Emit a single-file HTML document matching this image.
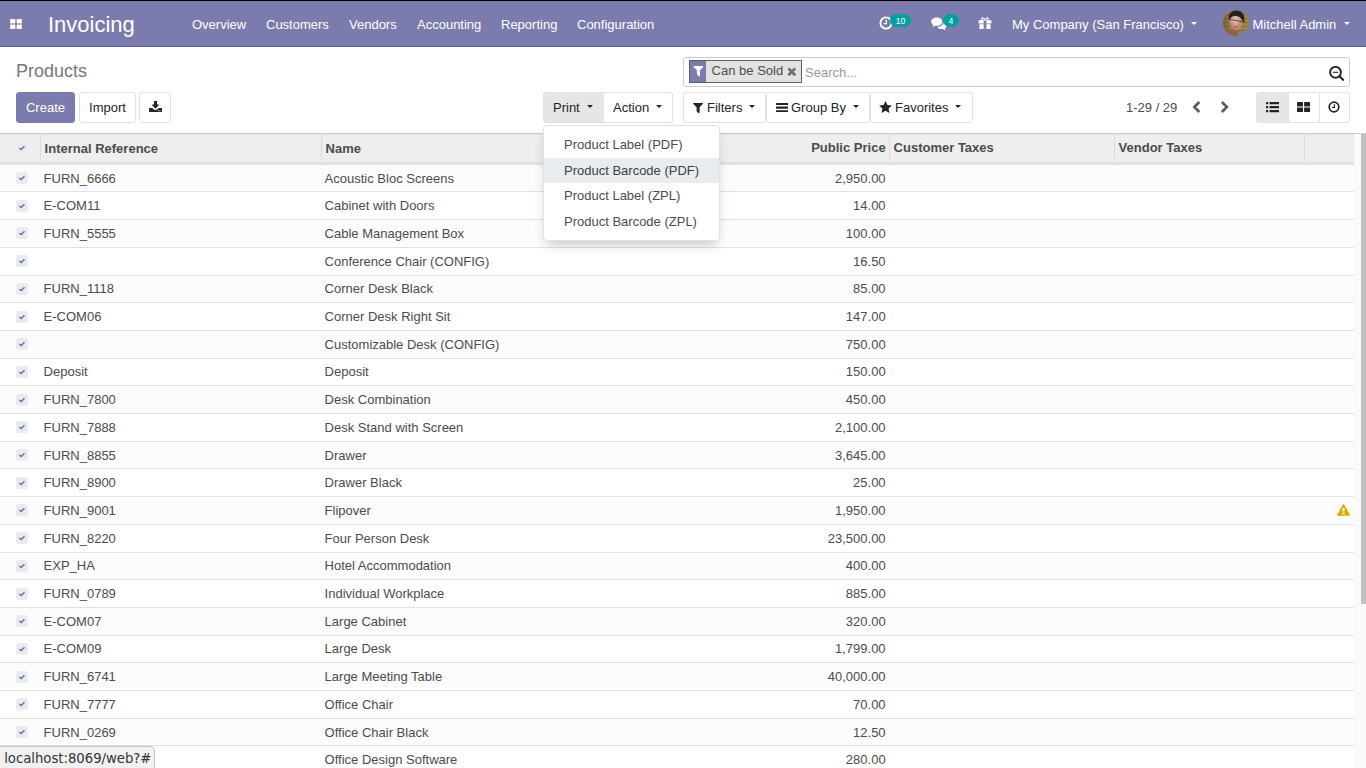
<!DOCTYPE html>
<html lang="en">
<head>
<meta charset="utf-8">
<title>Odoo - Products</title>
<style>
*{box-sizing:border-box;margin:0;padding:0}
html,body{width:1366px;height:768px;overflow:hidden;background:#fff}
body{font-family:"Liberation Sans",Arial,Helvetica,sans-serif;font-size:13px;line-height:19.5px;color:#4c4c4c;position:relative}
.abs{position:absolute}
svg{display:block}
/* navbar */
#topline{position:absolute;left:0;top:0;width:1366px;height:1px;background:#000}
#nav{position:absolute;left:0;top:1px;width:1366px;height:46px;background:#7C7BAD;border-bottom:1px solid #5f5e97;color:#fff}
#nav .t{position:absolute;white-space:nowrap;color:#fff}
#nav .menu{top:14px;font-size:13px;line-height:19.5px}
#brand{left:48px;top:7px;font-size:22px;line-height:33px}
.badge{position:absolute;background:#00A09D;color:#fff;border-radius:7px;font-size:8.6px;line-height:14.4px;height:13px;text-align:center}
.caret{position:absolute;width:0;height:0;border-left:3.2px solid transparent;border-right:3.2px solid transparent;border-top:3.4px solid #fff}
.caret.dk{border-top-color:#212529}
/* control panel */
#cp{position:absolute;left:0;top:47px;width:1366px;height:87px;background:#fff;border-bottom:1px solid #cacaca}
#crumb{position:absolute;left:16px;top:58px;font-size:18px;line-height:27px;color:#777}
.btn{position:absolute;top:92px;height:31px;border:1px solid #dee2e6;background:#fff;color:#212529;border-radius:3px;font-size:13px;line-height:29px;white-space:nowrap;text-align:center}
.btn.pri{background:#7C7BAD;border-color:#7C7BAD;color:#fff}
.btn.act{background:#e6e6e6}
#search{position:absolute;left:683px;top:57px;width:667px;height:30px;border:1px solid #ccc;border-radius:3px;background:#fff}
#facet{position:absolute;left:689px;top:60px;width:113px;height:23px;border:1px solid #57616b;background:#e2e2e0}
#facet .lab{position:absolute;left:0;top:0;width:16px;height:21px;background:#7C7BAD}
#facet .val{position:absolute;left:21.6px;top:0px;line-height:19px;color:#4c4c4c;white-space:nowrap}
#ph{position:absolute;left:805px;top:63px;color:#9a9a9a;line-height:19.5px}
/* dropdown */
#dd{position:absolute;left:543px;top:125px;width:177px;height:116px;background:#fff;border:1px solid #dee2e6;border-radius:4px;box-shadow:0 6px 12px -4px rgba(0,0,0,.25);padding-top:6px;z-index:5}
#dd div{height:25.5px;line-height:19.5px;padding:3px 20px;color:#4c4c4c;white-space:nowrap}
#dd div.hov{background:#e9ecef;color:#3f3f3f}
/* table */
#thead{position:absolute;left:0;top:134px;width:1354px;height:29.7px;background:#eee;border-top:1px solid #dee2e6;border-bottom:2px solid #dee2e6;font-weight:bold;color:#4c4c4c}
#thead .h{position:absolute;top:3.6px;line-height:19.5px;white-space:nowrap}
#thead .dv{position:absolute;top:0;width:1px;height:27px;background:#dcdcdc}
#tbody{position:absolute;left:0;top:163.75px;width:1354px}
.row{position:absolute;left:0;width:1354px;height:28.7px;border-top:1px solid #dee2e6;background:#fff}
.row.odd{background:#fcfcfc}
.row span,.row svg{position:absolute;top:3.8px;line-height:19.5px;white-space:nowrap}
.cb{left:16px;top:7.35px !important;width:12px;height:12px;border-radius:2.5px;background:#e9ecef}
.cb svg{top:0 !important;left:0}
#thead .cb{position:absolute;top:7.35px !important}
.c1{left:43.6px}.c2{left:324.6px}.c3{right:468.4px}
.warn{left:1337px;top:6.9px !important}
/* scrollbar */
#sbt{position:absolute;left:1354px;top:134px;width:12px;height:634px;background:#fafafa}
#sbh{position:absolute;left:1361px;top:134px;width:5px;height:470px;background:#c1c1c1}
/* status */
#status{position:absolute;left:-1px;top:746px;height:23px;width:156px;background:#f1f1f1;border:1px solid #c4c4c4;border-top-right-radius:4px;font-family:"DejaVu Sans Condensed","DejaVu Sans",sans-serif;font-size:14.7px;line-height:22px;color:#333;padding-left:4.2px;z-index:9;white-space:nowrap}
</style>
</head>
<body>
<div id="nav">
  <svg class="abs" style="left:10px;top:18px" width="12" height="10" viewBox="0 0 12 10"><rect x="0" y="0" width="5.4" height="4.4" rx=".8" fill="#fff"/><rect x="6.6" y="0" width="5.4" height="4.4" rx=".8" fill="#fff"/><rect x="0" y="5.6" width="5.4" height="4.4" rx=".8" fill="#fff"/><rect x="6.6" y="5.6" width="5.4" height="4.4" rx=".8" fill="#fff"/></svg>
  <span class="t" id="brand">Invoicing</span>
  <span class="t menu" style="left:192px">Overview</span>
  <span class="t menu" style="left:266px">Customers</span>
  <span class="t menu" style="left:349px">Vendors</span>
  <span class="t menu" style="left:417px">Accounting</span>
  <span class="t menu" style="left:501px">Reporting</span>
  <span class="t menu" style="left:577px">Configuration</span>
  <!-- activity clock -->
  <svg class="abs" style="left:879px;top:14.9px" width="14" height="14" viewBox="0 0 14 14"><circle cx="7" cy="7" r="5.6" fill="none" stroke="#fff" stroke-width="1.9"/><path d="M7.3 3.8 V7.6 H4.6" fill="none" stroke="#fff" stroke-width="1.3"/></svg>
  <span class="badge" style="left:890px;top:13px;width:21px">10</span>
  <!-- comments -->
  <svg class="abs" style="left:930.6px;top:16.2px" width="16.4" height="13.5" viewBox="0 0 17 14"><path d="M6 0.6 C9.2 0.6 11.8 2.5 11.8 4.9 C11.8 7.3 9.2 9.2 6 9.2 C5.5 9.2 5 9.15 4.5 9.05 C3.7 9.7 2.6 10.2 1.4 10.3 C2 9.7 2.4 9 2.5 8.3 C1.1 7.5 0.2 6.3 0.2 4.9 C0.2 2.5 2.8 0.6 6 0.6 Z" fill="#fff"/><path d="M13 5.2 C14.9 5.8 16.3 7.1 16.3 8.7 C16.3 9.9 15.5 11 14.3 11.7 C14.4 12.4 14.8 13 15.4 13.6 C14.2 13.5 13.2 13.1 12.4 12.4 C12 12.5 11.5 12.5 11 12.5 C9.3 12.5 7.8 12 6.8 11.1 C7 10.4 7 10.4 7.2 10.2 C10.6 10 13.2 7.8 13 5.2 Z" fill="#fff"/></svg>
  <span class="badge" style="left:943px;top:13px;width:16px">4</span>
  <!-- gift -->
  <svg class="abs" style="left:977.8px;top:15.7px" width="14" height="12.7" viewBox="0 0 14 13"><path d="M4.2 0.4 C5.3 0.1 6.3 1 7 2.3 C7.7 1 8.7 0.1 9.8 0.4 C11.3 0.8 11.4 2.7 10.2 3.4 H13.6 V6.6 H0.4 V3.4 H3.8 C2.6 2.7 2.7 0.8 4.2 0.4 Z M4.6 1.6 C4 1.7 4 2.6 4.6 2.9 C5.1 3.2 5.8 3.3 6.3 3.3 C6 2.5 5.3 1.5 4.6 1.6 Z M9.4 1.6 C8.7 1.5 8 2.5 7.7 3.3 C8.2 3.3 8.9 3.2 9.4 2.9 C10 2.6 10 1.7 9.4 1.6 Z" fill="#fff" fill-rule="evenodd"/><path d="M1.3 7.4 H12.7 V12 C12.7 12.5 12.3 12.8 11.9 12.8 H2.1 C1.7 12.8 1.3 12.5 1.3 12 Z" fill="#fff"/><rect x="5.6" y="3.6" width="2.8" height="8.6" fill="#7C7BAD"/></svg>
  <span class="t menu" style="left:1012px">My Company (San Francisco)</span>
  <span class="caret" style="left:1191px;top:21px"></span>
  <!-- avatar -->
  <svg class="abs" style="left:1223px;top:9px" width="26" height="26" viewBox="0 0 26 26"><defs><clipPath id="av"><circle cx="13" cy="13" r="13"/></clipPath><radialGradient id="fg" cx="45%" cy="35%" r="70%"><stop offset="0" stop-color="#dcc3b9"/><stop offset=".55" stop-color="#cfa08f"/><stop offset="1" stop-color="#b27a62"/></radialGradient><linearGradient id="bgg" x1="0" x2="1" y1="0" y2="0"><stop offset="0" stop-color="#75602f"/><stop offset=".35" stop-color="#957e3e"/><stop offset="1" stop-color="#a38b47"/></linearGradient></defs><g clip-path="url(#av)"><rect x="-1" y="-1" width="28" height="28" fill="url(#bgg)"/><path d="M-2 4.5 H28 M-2 8.5 H28 M-2 12.5 H28 M-2 16.5 H28 M-2 20.5 H28" stroke="#5f4c28" stroke-width=".9" opacity=".45"/><path d="M3 29 C3 22 7 20 11 19 L16 18.5 C18 21 18 25 17 29 Z" fill="#8c6248"/><path d="M15 22 C18 19.5 22.5 21.5 23 29 H13.5 Z" fill="#7c8385"/><ellipse cx="13.1" cy="12.4" rx="6.5" ry="8.5" transform="rotate(-10 13.1 12.4)" fill="#b98a72" opacity=".5"/><ellipse cx="13.1" cy="12.4" rx="5.8" ry="7.8" transform="rotate(-10 13.1 12.4)" fill="url(#fg)"/><ellipse cx="9.4" cy="13.8" rx="1.8" ry="2.1" fill="#c07f6c" opacity=".55"/><ellipse cx="16.2" cy="14.7" rx="1.8" ry="2.1" fill="#c07a68" opacity=".55"/><ellipse cx="6.3" cy="12" rx=".9" ry="1.8" fill="#b9735c" opacity=".8"/><path d="M6.2 9.8 C5 2.8 10 0.2 14.8 0.8 C20.2 1.5 22 6.2 20.6 13.4 C19.6 8.6 17.2 6.4 13.6 5.9 C10.6 5.5 7.8 6.8 6.2 9.8 Z" fill="#241f23" opacity=".45" transform="translate(13 6) scale(1.08) translate(-13 -6)"/><path d="M6.2 9.8 C5 2.8 10 0.2 14.8 0.8 C20.2 1.5 22 6.2 20.6 13.4 C19.6 8.6 17.2 6.4 13.6 5.9 C10.6 5.5 7.8 6.8 6.2 9.8 Z" fill="#231e22"/><path d="M6.4 9.5 L11.8 10.3 L19.4 11.9" stroke="#2e2629" stroke-width="1" fill="none" opacity=".8"/><ellipse cx="12.5" cy="16.7" rx="2.3" ry="1.3" fill="#b05866" opacity=".5"/><ellipse cx="12.5" cy="16.7" rx="1.6" ry=".8" fill="#b05866"/></g></svg>
  <span class="t menu" style="left:1252.5px">Mitchell Admin</span>
  <span class="caret" style="left:1344px;top:21px"></span>
</div>
<div id="topline"></div>

<div id="cp"></div>
<div id="crumb">Products</div>
<div class="btn pri" style="left:16px;width:59px">Create</div>
<div class="btn" style="left:79px;width:57px">Import</div>
<div class="btn" style="left:139px;width:32px"><svg class="abs" style="left:9px;top:7.8px" width="13" height="11.2" viewBox="0 0 13 11.2"><path d="M5 0 H8 V3.6 H10.4 L6.5 7.7 L2.6 3.6 H5 Z" fill="#212529"/><path d="M0.6 7 H3.3 L4.6 8.3 C5.6 9.3 7.4 9.3 8.4 8.3 L9.7 7 H12.4 C12.7 7 13 7.3 13 7.6 V10.6 C13 10.9 12.7 11.2 12.4 11.2 H.6 C.3 11.2 0 10.9 0 10.6 V7.6 C0 7.3 .3 7 .6 7Z" fill="#212529"/><circle cx="11" cy="9.7" r=".55" fill="#fff"/><circle cx="9.4" cy="9.7" r=".55" fill="#fff"/></svg></div>

<div class="btn act" style="left:543px;width:61px;border-radius:3px 0 0 3px;border-right:none;text-align:left;padding-left:9px">Print<span class="caret dk" style="left:42.9px;top:12px"></span></div>
<div class="btn" style="left:604px;width:69px;border-radius:0 3px 3px 0;border-left:none;text-align:left;padding-left:9px">Action<span class="caret dk" style="left:51.9px;top:12px"></span></div>

<div id="search"></div>
<div id="facet"><span class="lab"><svg class="abs" style="left:2.6px;top:5.4px" width="10.8" height="10.6" viewBox="0 0 10.2 10.6"><path d="M0.5 0 H9.7 C10.1 0 10.35 .5 10.05 .8 L6.6 4.3 V10.1 C6.6 10.5 6.1 10.7 5.85 10.45 L3.85 8.6 C3.7 8.45 3.6 8.25 3.6 8.05 V4.3 L.15 .8 C-.15 .5 .1 0 .5 0 Z" fill="#fff"/></svg></span><span class="val">Can be Sold</span><svg class="abs" style="left:97px;top:5.8px" width="9.6" height="9.6" viewBox="0 0 9 9"><path d="M1.3 1.3 L7.7 7.7 M7.7 1.3 L1.3 7.7" stroke="#69717a" stroke-width="2.6" stroke-linecap="butt"/></svg></div>
<div id="ph">Search...</div>
<svg class="abs" style="left:1329px;top:65.8px" width="16" height="15" viewBox="0 0 16 15"><circle cx="6.5" cy="6.3" r="5.4" fill="none" stroke="#212529" stroke-width="1.9"/><path d="M10.5 10.2 L14.1 13.8" stroke="#212529" stroke-width="2.1" stroke-linecap="round"/><path d="M3.8 6.3 H9.3" stroke="#212529" stroke-width="1.1"/></svg>

<div class="btn" style="left:683px;width:83px;text-align:left;padding-left:23px"><svg class="abs" style="left:9.2px;top:9.7px" width="10.2" height="10.6" viewBox="0 0 10.2 10.6"><path d="M0.5 0 H9.7 C10.1 0 10.35 .5 10.05 .8 L6.6 4.3 V10.1 C6.6 10.5 6.1 10.7 5.85 10.45 L3.85 8.6 C3.7 8.45 3.6 8.25 3.6 8.05 V4.3 L.15 .8 C-.15 .5 .1 0 .5 0 Z" fill="#212529"/></svg>Filters<span class="caret dk" style="left:64.9px;top:12px"></span></div>
<div class="btn" style="left:766px;width:104px;text-align:left;padding-left:24px"><svg class="abs" style="left:8.8px;top:9.8px" width="12.1" height="9.3" viewBox="0 0 12.1 9.3"><rect y="0" width="12.1" height="2.1" rx=".4" fill="#212529"/><rect y="3.6" width="12.1" height="2.1" rx=".4" fill="#212529"/><rect y="7.2" width="12.1" height="2.1" rx=".4" fill="#212529"/></svg>Group By<span class="caret dk" style="left:85.9px;top:12px"></span></div>
<div class="btn" style="left:870px;width:103px;text-align:left;padding-left:24px"><svg class="abs" style="left:8px;top:8px" width="13" height="12" viewBox="0 0 13 12"><path d="M6.5 0 L8.4 4 L12.9 4.6 L9.6 7.6 L10.5 12 L6.5 9.8 L2.5 12 L3.4 7.6 L0.1 4.6 L4.6 4 Z" fill="#212529"/></svg>Favorites<span class="caret dk" style="left:83.9px;top:12px"></span></div>

<div class="abs" style="left:1126px;top:98px;line-height:19.5px">1-29 / 29</div>
<svg class="abs" style="left:1192.4px;top:100.6px" width="9" height="12" viewBox="0 0 9 12"><path d="M7.3 1 L2.3 6 L7.3 11" fill="none" stroke="#5c5c5c" stroke-width="2.6"/></svg>
<svg class="abs" style="left:1220px;top:100.6px" width="9" height="12" viewBox="0 0 9 12"><path d="M1.9 1 L6.9 6 L1.9 11" fill="none" stroke="#5c5c5c" stroke-width="2.6"/></svg>

<div class="btn act" style="left:1256px;width:33px;border-radius:3px 0 0 3px"><svg class="abs" style="left:8.7px;top:9.4px" width="13.4" height="10.2" viewBox="0 0 13.4 10.2"><rect x="0" y="0" width="2.2" height="2.3" rx=".4" fill="#212529"/><rect x="3.5" y="0" width="9.9" height="2.3" rx=".4" fill="#212529"/><rect x="0" y="3.95" width="2.2" height="2.3" rx=".4" fill="#212529"/><rect x="3.5" y="3.95" width="9.9" height="2.3" rx=".4" fill="#212529"/><rect x="0" y="7.9" width="2.2" height="2.3" rx=".4" fill="#212529"/><rect x="3.5" y="7.9" width="9.9" height="2.3" rx=".4" fill="#212529"/></svg></div>
<div class="btn" style="left:1288px;width:32px;border-radius:0"><svg class="abs" style="left:8.1px;top:9px" width="13.1" height="10.2" viewBox="0 0 13.1 10.2"><rect x="0" y="0" width="6" height="4.6" rx=".6" fill="#212529"/><rect x="7.1" y="0" width="6" height="4.6" rx=".6" fill="#212529"/><rect x="0" y="5.6" width="6" height="4.6" rx=".6" fill="#212529"/><rect x="7.1" y="5.6" width="6" height="4.6" rx=".6" fill="#212529"/></svg></div>
<div class="btn" style="left:1319px;width:31px;border-radius:0 3px 3px 0"><svg class="abs" style="left:8.3px;top:8.2px" width="12" height="12" viewBox="0 0 12 12"><circle cx="6" cy="6" r="4.8" fill="none" stroke="#212529" stroke-width="1.7"/><path d="M6.4 3.2 V6.5 H3.9" fill="none" stroke="#212529" stroke-width="1.2"/></svg></div>

<div id="thead">
  <span class="cb"><svg viewBox="0 0 12 12" width="12" height="12"><path d="M3.3 6.0 L5.2 7.6 L8.5 4.2" fill="none" stroke="#716bad" stroke-width="1.45"/></svg></span>
  <span class="dv" style="left:40px"></span>
  <span class="h" style="left:44.6px">Internal Reference</span>
  <span class="dv" style="left:321px"></span>
  <span class="h" style="left:325.6px">Name</span>
  <span class="h" style="right:468.4px;top:2.6px">Public Price</span>
  <span class="dv" style="left:889px"></span>
  <span class="h" style="left:893.6px;top:2.6px">Customer Taxes</span>
  <span class="dv" style="left:1114px"></span>
  <span class="h" style="left:1118.6px;top:2.6px">Vendor Taxes</span>
  <span class="dv" style="left:1304px"></span>
</div>
<div id="tbody">
<div class="row odd" style="top:0.00px"><span class="cb"><svg viewBox="0 0 12 12" width="12" height="12"><path d="M3.3 6.0 L5.2 7.6 L8.5 4.2" fill="none" stroke="#716bad" stroke-width="1.45"/></svg></span><span class="c1">FURN_6666</span><span class="c2">Acoustic Bloc Screens</span><span class="c3">2,950.00</span></div>
<div class="row" style="top:27.70px"><span class="cb"><svg viewBox="0 0 12 12" width="12" height="12"><path d="M3.3 6.0 L5.2 7.6 L8.5 4.2" fill="none" stroke="#716bad" stroke-width="1.45"/></svg></span><span class="c1">E-COM11</span><span class="c2">Cabinet with Doors</span><span class="c3">14.00</span></div>
<div class="row odd" style="top:55.40px"><span class="cb"><svg viewBox="0 0 12 12" width="12" height="12"><path d="M3.3 6.0 L5.2 7.6 L8.5 4.2" fill="none" stroke="#716bad" stroke-width="1.45"/></svg></span><span class="c1">FURN_5555</span><span class="c2">Cable Management Box</span><span class="c3">100.00</span></div>
<div class="row" style="top:83.10px"><span class="cb"><svg viewBox="0 0 12 12" width="12" height="12"><path d="M3.3 6.0 L5.2 7.6 L8.5 4.2" fill="none" stroke="#716bad" stroke-width="1.45"/></svg></span><span class="c1"></span><span class="c2">Conference Chair (CONFIG)</span><span class="c3">16.50</span></div>
<div class="row odd" style="top:110.80px"><span class="cb"><svg viewBox="0 0 12 12" width="12" height="12"><path d="M3.3 6.0 L5.2 7.6 L8.5 4.2" fill="none" stroke="#716bad" stroke-width="1.45"/></svg></span><span class="c1">FURN_1118</span><span class="c2">Corner Desk Black</span><span class="c3">85.00</span></div>
<div class="row" style="top:138.50px"><span class="cb"><svg viewBox="0 0 12 12" width="12" height="12"><path d="M3.3 6.0 L5.2 7.6 L8.5 4.2" fill="none" stroke="#716bad" stroke-width="1.45"/></svg></span><span class="c1">E-COM06</span><span class="c2">Corner Desk Right Sit</span><span class="c3">147.00</span></div>
<div class="row odd" style="top:166.20px"><span class="cb"><svg viewBox="0 0 12 12" width="12" height="12"><path d="M3.3 6.0 L5.2 7.6 L8.5 4.2" fill="none" stroke="#716bad" stroke-width="1.45"/></svg></span><span class="c1"></span><span class="c2">Customizable Desk (CONFIG)</span><span class="c3">750.00</span></div>
<div class="row" style="top:193.90px"><span class="cb"><svg viewBox="0 0 12 12" width="12" height="12"><path d="M3.3 6.0 L5.2 7.6 L8.5 4.2" fill="none" stroke="#716bad" stroke-width="1.45"/></svg></span><span class="c1">Deposit</span><span class="c2">Deposit</span><span class="c3">150.00</span></div>
<div class="row odd" style="top:221.60px"><span class="cb"><svg viewBox="0 0 12 12" width="12" height="12"><path d="M3.3 6.0 L5.2 7.6 L8.5 4.2" fill="none" stroke="#716bad" stroke-width="1.45"/></svg></span><span class="c1">FURN_7800</span><span class="c2">Desk Combination</span><span class="c3">450.00</span></div>
<div class="row" style="top:249.30px"><span class="cb"><svg viewBox="0 0 12 12" width="12" height="12"><path d="M3.3 6.0 L5.2 7.6 L8.5 4.2" fill="none" stroke="#716bad" stroke-width="1.45"/></svg></span><span class="c1">FURN_7888</span><span class="c2">Desk Stand with Screen</span><span class="c3">2,100.00</span></div>
<div class="row odd" style="top:277.00px"><span class="cb"><svg viewBox="0 0 12 12" width="12" height="12"><path d="M3.3 6.0 L5.2 7.6 L8.5 4.2" fill="none" stroke="#716bad" stroke-width="1.45"/></svg></span><span class="c1">FURN_8855</span><span class="c2">Drawer</span><span class="c3">3,645.00</span></div>
<div class="row" style="top:304.70px"><span class="cb"><svg viewBox="0 0 12 12" width="12" height="12"><path d="M3.3 6.0 L5.2 7.6 L8.5 4.2" fill="none" stroke="#716bad" stroke-width="1.45"/></svg></span><span class="c1">FURN_8900</span><span class="c2">Drawer Black</span><span class="c3">25.00</span></div>
<div class="row odd" style="top:332.40px"><span class="cb"><svg viewBox="0 0 12 12" width="12" height="12"><path d="M3.3 6.0 L5.2 7.6 L8.5 4.2" fill="none" stroke="#716bad" stroke-width="1.45"/></svg></span><span class="c1">FURN_9001</span><span class="c2">Flipover</span><span class="c3">1,950.00</span><svg class="warn" viewBox="0 0 14 13" width="13" height="12"><path d="M7 0.4 C7.4 0.4 7.7 0.6 7.9 0.9 L13.7 11.3 C14.1 12 13.6 12.8 12.8 12.8 L1.2 12.8 C0.4 12.8 -0.1 12 0.3 11.3 L6.1 0.9 C6.3 0.6 6.6 0.4 7 0.4 Z" fill="#e0a800"/><path d="M5.8 4.4 H8.2 L7.95 8 H6.05 Z" fill="#fff"/><rect x="5.85" y="9.1" width="2.3" height="1.9" rx="0.3" fill="#fff"/></svg></div>
<div class="row" style="top:360.10px"><span class="cb"><svg viewBox="0 0 12 12" width="12" height="12"><path d="M3.3 6.0 L5.2 7.6 L8.5 4.2" fill="none" stroke="#716bad" stroke-width="1.45"/></svg></span><span class="c1">FURN_8220</span><span class="c2">Four Person Desk</span><span class="c3">23,500.00</span></div>
<div class="row odd" style="top:387.80px"><span class="cb"><svg viewBox="0 0 12 12" width="12" height="12"><path d="M3.3 6.0 L5.2 7.6 L8.5 4.2" fill="none" stroke="#716bad" stroke-width="1.45"/></svg></span><span class="c1">EXP_HA</span><span class="c2">Hotel Accommodation</span><span class="c3">400.00</span></div>
<div class="row" style="top:415.50px"><span class="cb"><svg viewBox="0 0 12 12" width="12" height="12"><path d="M3.3 6.0 L5.2 7.6 L8.5 4.2" fill="none" stroke="#716bad" stroke-width="1.45"/></svg></span><span class="c1">FURN_0789</span><span class="c2">Individual Workplace</span><span class="c3">885.00</span></div>
<div class="row odd" style="top:443.20px"><span class="cb"><svg viewBox="0 0 12 12" width="12" height="12"><path d="M3.3 6.0 L5.2 7.6 L8.5 4.2" fill="none" stroke="#716bad" stroke-width="1.45"/></svg></span><span class="c1">E-COM07</span><span class="c2">Large Cabinet</span><span class="c3">320.00</span></div>
<div class="row" style="top:470.90px"><span class="cb"><svg viewBox="0 0 12 12" width="12" height="12"><path d="M3.3 6.0 L5.2 7.6 L8.5 4.2" fill="none" stroke="#716bad" stroke-width="1.45"/></svg></span><span class="c1">E-COM09</span><span class="c2">Large Desk</span><span class="c3">1,799.00</span></div>
<div class="row odd" style="top:498.60px"><span class="cb"><svg viewBox="0 0 12 12" width="12" height="12"><path d="M3.3 6.0 L5.2 7.6 L8.5 4.2" fill="none" stroke="#716bad" stroke-width="1.45"/></svg></span><span class="c1">FURN_6741</span><span class="c2">Large Meeting Table</span><span class="c3">40,000.00</span></div>
<div class="row" style="top:526.30px"><span class="cb"><svg viewBox="0 0 12 12" width="12" height="12"><path d="M3.3 6.0 L5.2 7.6 L8.5 4.2" fill="none" stroke="#716bad" stroke-width="1.45"/></svg></span><span class="c1">FURN_7777</span><span class="c2">Office Chair</span><span class="c3">70.00</span></div>
<div class="row odd" style="top:554.00px"><span class="cb"><svg viewBox="0 0 12 12" width="12" height="12"><path d="M3.3 6.0 L5.2 7.6 L8.5 4.2" fill="none" stroke="#716bad" stroke-width="1.45"/></svg></span><span class="c1">FURN_0269</span><span class="c2">Office Chair Black</span><span class="c3">12.50</span></div>
<div class="row" style="top:581.70px"><span class="cb"><svg viewBox="0 0 12 12" width="12" height="12"><path d="M3.3 6.0 L5.2 7.6 L8.5 4.2" fill="none" stroke="#716bad" stroke-width="1.45"/></svg></span><span class="c1"></span><span class="c2">Office Design Software</span><span class="c3">280.00</span></div>
</div>
<div id="sbt"></div><div id="sbh"></div>

<div id="dd">
  <div>Product Label (PDF)</div>
  <div class="hov">Product Barcode (PDF)</div>
  <div>Product Label (ZPL)</div>
  <div>Product Barcode (ZPL)</div>
</div>

<div id="status">localhost:8069/web?#</div>
</body>
</html>
